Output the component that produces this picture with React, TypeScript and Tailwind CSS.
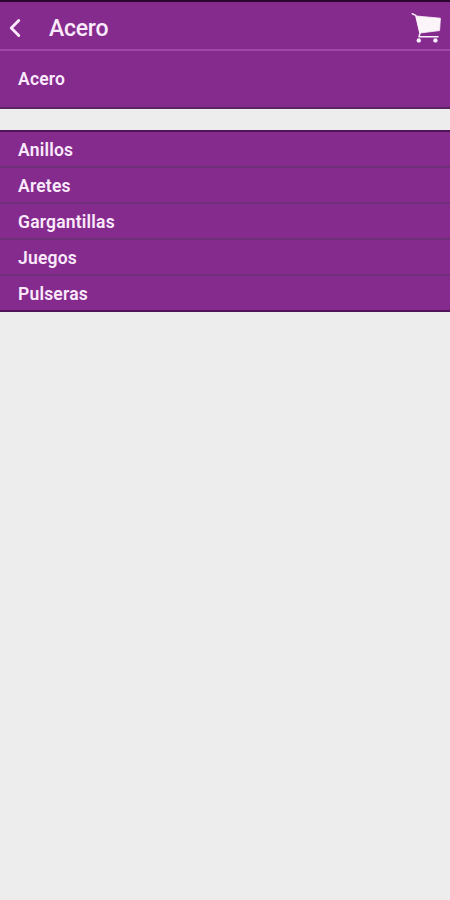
import { ChevronLeft } from "lucide-react";

const categories = ["Anillos", "Aretes", "Gargantillas", "Juegos", "Pulseras"];

const CartIcon = () => (
  <svg width="32" height="32" viewBox="0 0 32 32" fill="none">
    <path
      d="M2.2 1.8 L5.8 3.4 L10 21 L9 24.8 H28"
      stroke="#fbf0fb"
      strokeWidth="1.5"
      strokeLinecap="round"
      strokeLinejoin="round"
    />
    <path
      d="M6.2 4 L30.4 6.2 L29.6 18.6 L10 21 Z"
      fill="#fbf5fa"
      stroke="#fbf5fa"
      strokeWidth="0.8"
      strokeLinejoin="round"
    />
    <circle cx="8.8" cy="28.4" r="2.2" fill="#fbf0fb" />
    <circle cx="25.4" cy="28.4" r="2.2" fill="#fbf0fb" />
  </svg>
);

const Header = () => (
  <header className="flex h-[51px] items-center border-t-2 border-b-2 border-t-[#29052f] border-b-[#9f48a8] bg-[#862b8e] pt-1 pr-2">
    <button className="flex w-[49px] items-center" aria-label="Volver">
      <ChevronLeft className="size-[30px] text-[#faeafb]" strokeWidth={2.3} />
    </button>
    <h1 className="pt-0.5 text-[23px] leading-[26px] font-medium tracking-[-0.25px] text-[#faeafb]">
      Acero
    </h1>
    <div className="ml-auto">
      <CartIcon />
    </div>
  </header>
);

const App = () => {
  return (
    <div className="min-h-screen bg-[#ededed] font-['Roboto',sans-serif] text-[17.5px] font-semibold tracking-[0.2px] text-[#faeafb]">
      <Header />
      <section className="flex h-[58px] items-center border-b-2 border-[#5a2662] bg-[#862b8e] px-[18px]">
        <p>Acero</p>
      </section>
      <ul className="mt-[21px] border-t-2 border-b-2 border-[#4f145a] bg-[#862b8e]">
        {categories.map((category) => (
          <li
            key={category}
            className="flex h-9 items-center border-b-2 border-[#6f3079] px-[18px] pt-[3px] last:h-[34px] last:border-b-0"
          >
            {category}
          </li>
        ))}
      </ul>
    </div>
  );
};

export default App;
